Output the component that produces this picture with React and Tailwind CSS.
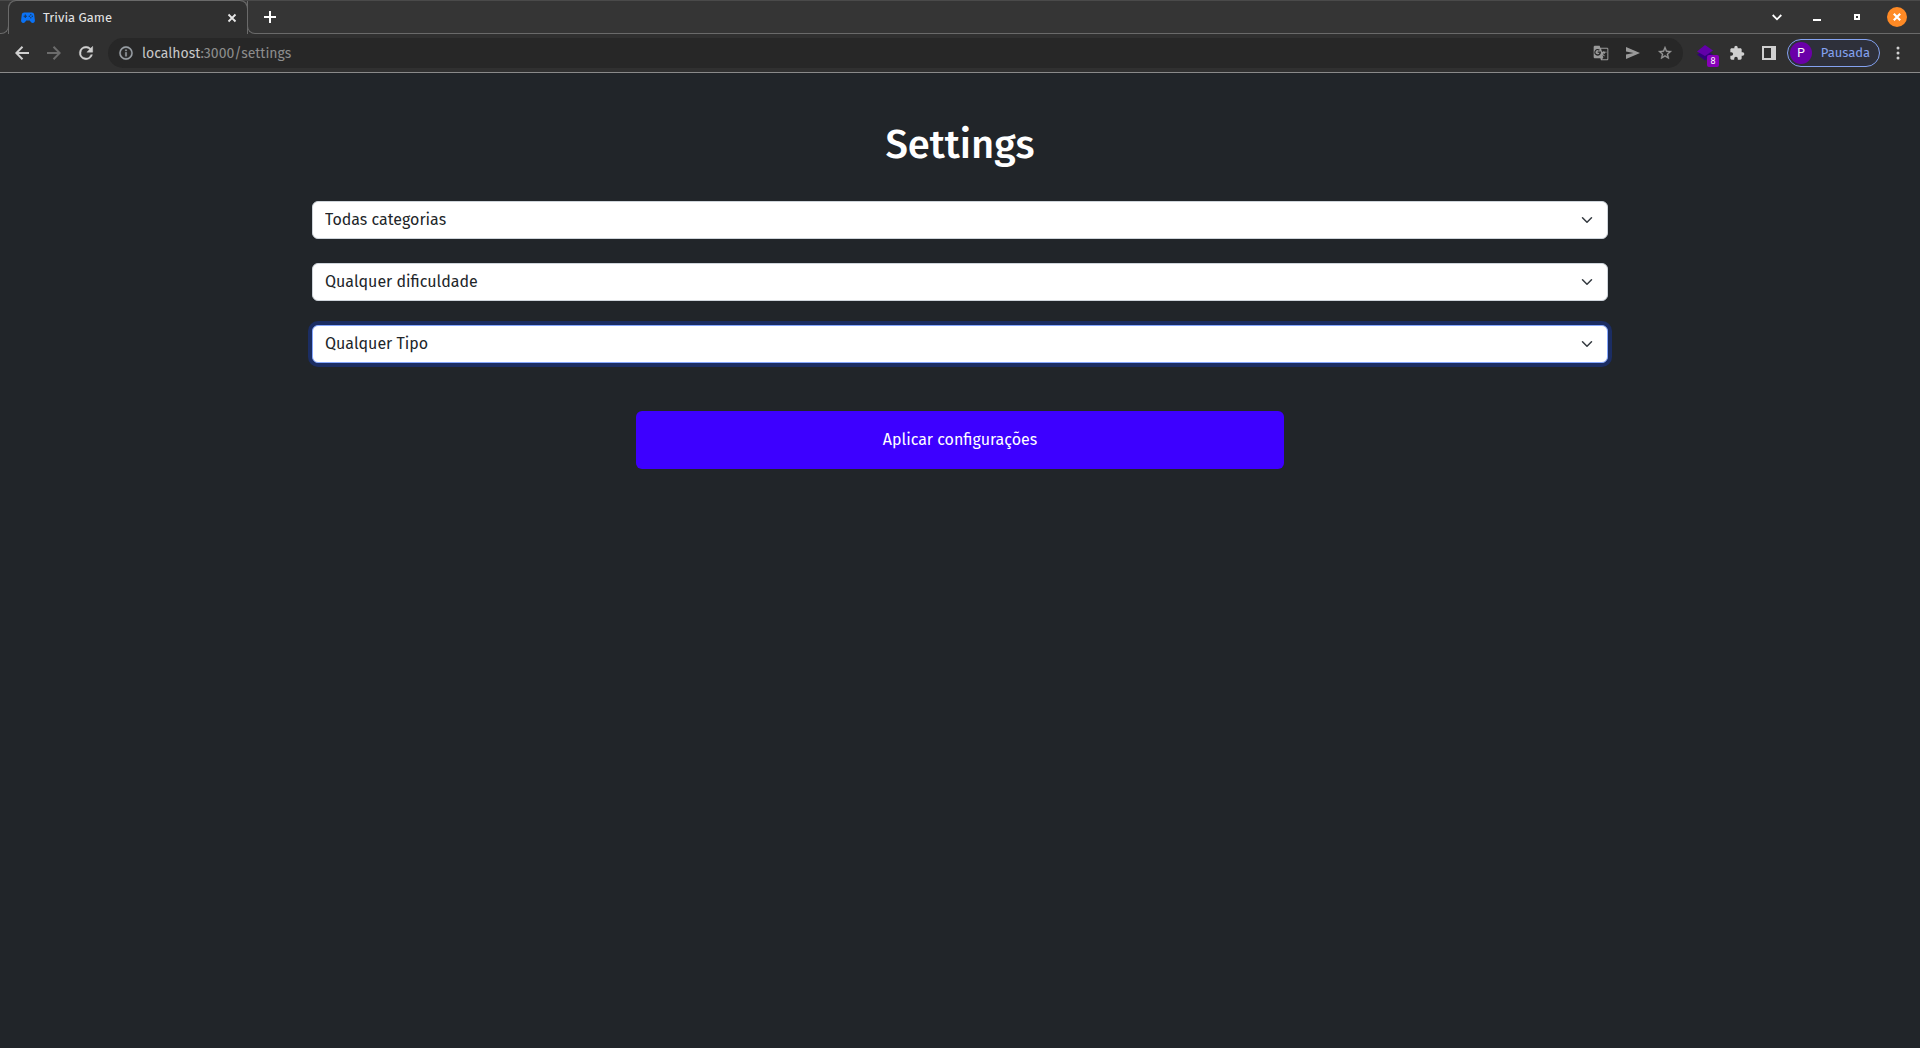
import { useState } from "react";

const FONT = "font-['Fira_Sans','Noto_Sans',sans-serif]";

function Icon({ size = 18, className = "", children, ...rest }) {
  return (
    <svg width={size} height={size} viewBox="0 0 24 24" fill="currentColor" className={"shrink-0 " + className} aria-hidden="true" {...rest}>
      {children}
    </svg>
  );
}

function IconButton({ label, className = "text-[#d0d0d0]", children }) {
  return (
    <button type="button" aria-label={label} className={"flex h-7 w-8 shrink-0 items-center justify-center " + className}>
      {children}
    </button>
  );
}

function TabStrip() {
  return (
    <header className="flex h-[34px] border-t border-[#4a4a4a] bg-[#303030] text-white">
      <div className="flex w-[9px] shrink-0 flex-col">
        <div className="h-4 bg-[#353535]" />
        <div className="grow rounded-br-lg border-r border-b border-[#6a6a6a] bg-[#353535]" />
      </div>
      <div className="-ml-px w-60 shrink-0 bg-[#353535]">
        <div className="flex h-full items-center rounded-t-lg border-x border-[#6a6a6a] bg-[#303030] pr-[7px] pl-3 shadow-[0_-1px_0_#6a6a6a]">
          <svg width="14" height="12" viewBox="0 0 14 12" className="shrink-0" aria-hidden="true">
            <path d="M3.200 .6h7.600c1.300 0 2.200.8 2.400 2l.7 5.600c.2 1.600-.8 2.800-2.100 2.800-.8 0-1.400-.3-1.900-.9L8.700 8.500H5.300L4.100 10.100c-.5.600-1.100.9-1.900.9C.9 11-.1 9.800.1 8.200l.7-5.600c.2-1.200 1.100-2 2.400-2z" fill="#0a72f5" />
            <path d="M4.300 2.600v3.400M2.600 4.300h3.400" stroke="#17375f" strokeWidth="1.100" />
            <g fill="#17375f">
              <circle cx="9.800" cy="2.800" r=".7" />
              <circle cx="9.800" cy="5.800" r=".7" />
              <circle cx="8.300" cy="4.300" r=".7" />
              <circle cx="11.300" cy="4.300" r=".7" />
            </g>
          </svg>
          <span className="ml-2 grow text-[13px] leading-4 text-[#e4e4e4]">Trivia Game</span>
          <button type="button" aria-label="Fechar guia" className="flex size-4 items-center justify-center">
            <svg width="10" height="10" viewBox="0 0 10 10" aria-hidden="true">
              <path d="M1.500 1.500l7 7M8.500 1.500l-7 7" stroke="#e8e8e8" strokeWidth="1.800" />
            </svg>
          </button>
        </div>
      </div>
      <div className="-ml-px flex grow items-center justify-between rounded-bl-lg border-b border-l border-[#6a6a6a] bg-[#353535] pr-[7px] pl-[6px]">
        <IconButton label="Nova guia" className="text-white">
          <svg width="12" height="12" viewBox="0 0 12 12" aria-hidden="true">
            <path d="M6 0v12M0 6h12" stroke="currentColor" strokeWidth="2" />
          </svg>
        </IconButton>
        <div className="flex items-center gap-2">
          <IconButton label="Pesquisar guias" className="text-white">
            <svg width="10" height="7" viewBox="0 0 10 7" fill="none" aria-hidden="true">
              <path d="M.7 1l4.300 4.300L9.300 1" stroke="currentColor" strokeWidth="1.800" />
            </svg>
          </IconButton>
          <IconButton label="Minimizar" className="pt-[6px] text-white">
            <svg width="8" height="2" viewBox="0 0 8 2" aria-hidden="true">
              <path d="M0 1h8" stroke="currentColor" strokeWidth="2" />
            </svg>
          </IconButton>
          <IconButton label="Restaurar" className="text-white">
            <svg width="6" height="6" viewBox="0 0 6 6" fill="none" aria-hidden="true">
              <path d="M1 1h4v4H1z" stroke="currentColor" strokeWidth="2" />
            </svg>
          </IconButton>
          <IconButton label="Fechar" className="text-white">
            <span className="flex size-5 items-center justify-center rounded-full bg-[#ff8a25]">
              <svg width="8" height="8" viewBox="0 0 8 8" aria-hidden="true">
                <path d="M.8.8l6.400 6.400M7.200.8L.8 7.200" stroke="currentColor" strokeWidth="2.200" />
              </svg>
            </span>
          </IconButton>
        </div>
      </div>
    </header>
  );
}

function Toolbar() {
  return (
    <nav className="flex h-[39px] items-center border-b border-[#8a8a8a] bg-[#303030] px-[6px]">
      <IconButton label="Voltar">
        <svg width="14" height="14" viewBox="0 0 14 14" fill="none" aria-hidden="true">
          <path d="M14 7H1.500M7.500 .8L1.300 7l6.200 6.200" stroke="currentColor" strokeWidth="2" />
        </svg>
      </IconButton>
      <IconButton label="Avançar" className="text-[#6c6c6c]">
        <svg width="14" height="14" viewBox="0 0 14 14" fill="none" aria-hidden="true">
          <path d="M0 7h12.500M6.500 .8L12.700 7l-6.200 6.200" stroke="currentColor" strokeWidth="2" />
        </svg>
      </IconButton>
      <IconButton label="Recarregar">
        <Icon size={20}>
          <path d="M17.650 6.350A7.960 7.960 0 0 0 12 4a8 8 0 1 0 7.730 10h-2.080A6 6 0 1 1 12 6c1.660 0 3.140.69 4.220 1.780L13 11h7V4l-2.350 2.350z" stroke="currentColor" strokeWidth=".5" />
        </Icon>
      </IconButton>

      <div className="mr-[6px] ml-[6px] flex h-[30px] min-w-0 grow items-center rounded-full bg-[#272727] pr-[2px] pl-[10px]">
        <Icon size={16} className="text-[#9aa0a6]">
          <path d="M11 7h2v2h-2zm0 4h2v6h-2zm1-9a10 10 0 1 0 0 20 10 10 0 0 0 0-20zm0 18a8 8 0 1 1 0-16 8 8 0 0 1 0 16z" stroke="currentColor" strokeWidth=".5" />
        </Icon>
        <p className="ml-2 grow pt-px text-sm text-[#8d8d8d]">
          <span className="text-[#c9c9c9]">localhost</span>:3000/settings
        </p>
        <IconButton label="Traduzir" className="text-[#9a9a9a]">
          <Icon size={16}>
            <path fillRule="evenodd" d="M21 4H11l-1-3H3C1.900 1 1 1.900 1 3v15c0 1.100.9 2 2 2h8l1 3h9c1.100 0 2-.9 2-2V6c0-1.100-.9-2-2-2zM7 16a5 5 0 1 1 3.350-8.710l-1.400 1.340A3 3 0 1 0 9.800 11.700H7V9.900h4.800c.05.300.08.600.08.900C11.900 13.900 9.900 16 7 16zM21.500 21c0 .3-.2.500-.5.500h-7.500l2-2.500-1.300-4.400 2.600 2.600.9-.9-2.700-2.700c.3-.4.600-.9.900-1.400.3.500.8 1 1.200 1.400.6-.7 1.100-1.500 1.300-2.300h2.100V10h-3.600V9h-1.300v1h-2.100l-1.400-4.500H21c.3 0 .5.200.5.500z" />
          </Icon>
        </IconButton>
        <IconButton label="Enviar" className="text-[#9a9a9a]">
          <svg width="14" height="12" viewBox="0 0 14 12" fill="currentColor" aria-hidden="true">
            <path d="M0 0L14 6 0 12V7.400L7.500 6 0 4.600z" />
          </svg>
        </IconButton>
        <IconButton label="Favoritos" className="text-[#9a9a9a]">
          <Icon size={16}>
            <path d="M22 9.240l-7.190-.62L12 2 9.190 8.630 2 9.240l5.460 4.730L5.820 21 12 17.270 18.180 21l-1.630-7.030L22 9.240zM12 15.400l-3.760 2.270 1-4.280-3.320-2.880 4.380-.38L12 6.100l1.710 4.040 4.380.38-3.320 2.880 1 4.280L12 15.400z" stroke="currentColor" strokeWidth=".5" />
          </Icon>
        </IconButton>
      </div>

      <button type="button" aria-label="Extensão, 8 itens" className="relative flex h-7 w-8 shrink-0 items-center justify-center">
        <svg width="16" height="16" viewBox="0 0 16 16" aria-hidden="true">
          <path d="M0 9.500L8 5l8 4.500L8 15.500z" fill="#32007a" />
          <path d="M0 6.500L8 0l8 5.500-8 5.500z" fill="#6200a8" />
        </svg>
        <span className="absolute top-4 left-[18px] flex size-3 items-center justify-center rounded-xs bg-[#8700b8] font-['Roboto',sans-serif] text-[9px] leading-3 text-white">
          8
        </span>
      </button>
      <IconButton label="Extensões">
        <Icon size={16}>
          <path d="M20.500 11H19V7c0-1.100-.9-2-2-2h-4V3.500a2.500 2.500 0 0 0-5 0V5H4c-1.100 0-2 .9-2 2v3.800h1.500a2.700 2.700 0 0 1 0 5.400H2V20c0 1.100.9 2 2 2h3.800v-1.500a2.700 2.700 0 0 1 5.400 0V22H17c1.100 0 2-.9 2-2v-4h1.500a2.500 2.500 0 0 0 0-5z" />
        </Icon>
      </IconButton>
      <IconButton label="Painel lateral">
        <svg width="14" height="14" viewBox="0 0 14 14" aria-hidden="true">
          <path fillRule="evenodd" fill="currentColor" d="M0 0h14v14H0zM2 2v10h7V2z" />
        </svg>
      </IconButton>
      <button type="button" className="mx-[2px] flex h-7 w-[93px] shrink-0 items-center rounded-full border border-[#84a2f0] bg-[#2e303a] pl-[2px] text-[#84a2f0]">
        <span className="flex size-[22px] shrink-0 items-center justify-center rounded-full bg-[#6a00a8] font-['Roboto',sans-serif] text-xs text-white">
          P
        </span>
        <span className="grow text-center text-[13px]">Pausada</span>
      </button>
      <IconButton label="Menu">
        <svg width="4" height="14" viewBox="0 0 4 14" fill="currentColor" aria-hidden="true">
          <circle cx="2" cy="2" r="1.500" />
          <circle cx="2" cy="7" r="1.500" />
          <circle cx="2" cy="12" r="1.500" />
        </svg>
      </IconButton>
    </nav>
  );
}

function SelectField({ label, option, active, onActivate }) {
  return (
    <div className="relative">
      <select
        aria-label={label}
        onFocus={onActivate}
        className={
          "block h-[38px] w-full appearance-none rounded-md border bg-white px-3 text-base text-[#212529] outline-none " +
          (active ? "border-[#86a8fe] shadow-[0_0_0_4px_#1b2d63]" : "border-[#ced4da]")
        }
      >
        <option>{option}</option>
      </select>
      <svg width="12" height="12" viewBox="0 0 16 16" fill="none" className="pointer-events-none absolute top-[13px] right-[15px]" aria-hidden="true">
        <path d="m2 5 6 6 6-6" stroke="#343a40" strokeWidth="2" strokeLinecap="round" strokeLinejoin="round" />
      </svg>
    </div>
  );
}

const FIELDS = [
  { label: "Categoria", option: "Todas categorias" },
  { label: "Dificuldade", option: "Qualquer dificuldade" },
  { label: "Tipo", option: "Qualquer Tipo" },
];

export default function App() {
  const [active, setActive] = useState("Tipo");
  return (
    <div className={"flex min-h-screen flex-col bg-[#212529] " + FONT}>
      <TabStrip />
      <Toolbar />
      <main className="mx-auto w-full max-w-[1320px] px-3 pt-12 text-center">
        <h1 className="text-[40px] leading-12 font-medium text-white">Settings</h1>
        <form className="mt-8 flex flex-col gap-6" onSubmit={(e) => e.preventDefault()}>
          {FIELDS.map((f) => (
            <SelectField key={f.label} {...f} active={active === f.label} onActivate={() => setActive(f.label)} />
          ))}
          <button type="submit" className="mx-auto mt-6 w-1/2 rounded-md bg-[#3d00ff] py-[17px] text-base text-white">
            Aplicar configurações
          </button>
        </form>
      </main>
    </div>
  );
}
